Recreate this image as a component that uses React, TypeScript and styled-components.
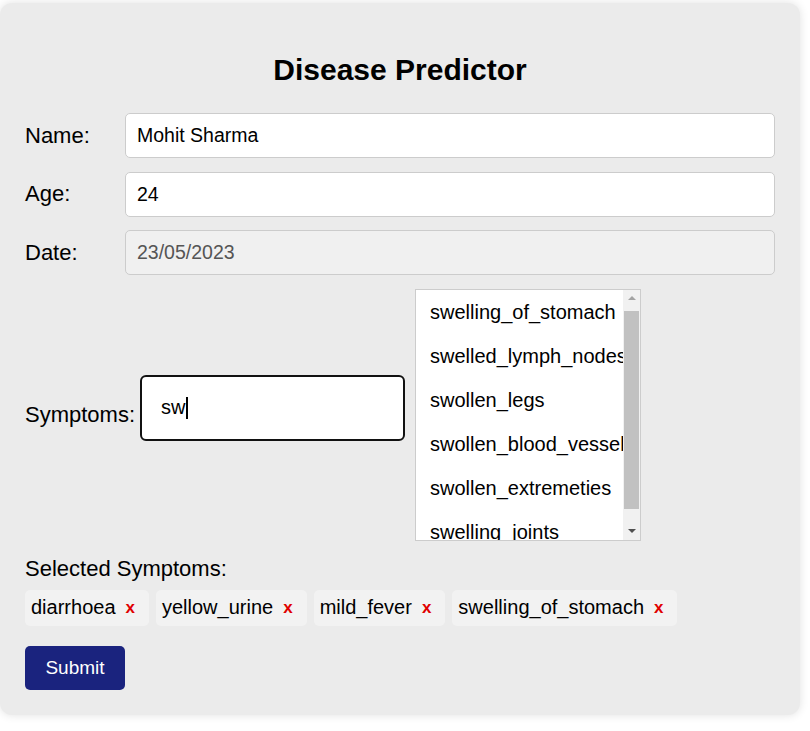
import React from "react";
import styled, { createGlobalStyle } from "styled-components";

const GlobalStyle = createGlobalStyle`
  html, body {
    margin: 0;
    padding: 0;
    background: #ffffff;
    font-family: "Liberation Sans", Arial, sans-serif;
  }
`;

const Page = styled.div`
  padding: 3px 10px 14px 0;
`;

const Card = styled.div`
  width: 800px;
  box-sizing: border-box;
  padding: 25px 25px 25px;
  background: #ebebeb;
  border-radius: 12px;
  box-shadow: 0 0 10px rgba(0, 0, 0, 0.12);
`;

const Title = styled.h2`
  margin: 25px 0 26px;
  font-size: 30px;
  line-height: 34px;
  font-weight: bold;
  text-align: center;
  color: #000;
`;

const FieldRow = styled.div`
  display: flex;
  align-items: center;
  height: 45px;
  margin-bottom: 13.5px;
`;

const Label = styled.label`
  width: 100px;
  flex-shrink: 0;
  font-size: 22px;
  color: #000;
`;

const TextInput = styled.input<{ $disabled?: boolean }>`
  flex: 1;
  height: 45px;
  box-sizing: border-box;
  border: 1px solid #cccccc;
  border-radius: 5px;
  padding: 0 11px;
  font-family: "Liberation Sans", Arial, sans-serif;
  font-size: 19.5px;
  color: ${(p) => (p.$disabled ? "#555555" : "#000000")};
  background: ${(p) => (p.$disabled ? "#f0f0f0" : "#ffffff")};
  outline: none;
`;

const SymptomsRow = styled.div`
  display: flex;
  align-items: center;
  margin-top: 1.5px;
`;

const SymptomsLabel = styled.label`
  font-size: 22px;
  color: #000;
  margin-right: 5px;
`;

const SearchBox = styled.div`
  width: 265px;
  height: 66px;
  box-sizing: border-box;
  border: 2px solid #111111;
  border-radius: 6px;
  background: #ffffff;
  padding-left: 19px;
  display: flex;
  align-items: center;
  font-size: 20px;
  color: #000;
  margin-right: 10px;
  margin-bottom: 14px;
`;

const Caret = styled.span`
  display: inline-block;
  width: 1.5px;
  height: 22px;
  background: #000;
  margin-left: 1px;
`;

const SuggestList = styled.div`
  width: 226px;
  height: 252px;
  box-sizing: border-box;
  border: 1px solid #cccccc;
  background: #ffffff;
  display: flex;
  overflow: hidden;
`;

const Items = styled.ul`
  flex: 1;
  min-width: 0;
  margin: 0;
  padding: 0;
  list-style: none;
  overflow: hidden;
`;

const Item = styled.li`
  padding: 12px 0 12px 14px;
  line-height: 20px;
  font-size: 20px;
  color: #000;
  white-space: nowrap;
  overflow: hidden;
`;

const ScrollTrack = styled.div`
  width: 17px;
  flex-shrink: 0;
  background: #f1f1f1;
  display: flex;
  flex-direction: column;
`;

const ScrollButton = styled.div`
  height: 17px;
  display: flex;
  align-items: center;
  justify-content: center;
`;

const Arrow = styled.span<{ $dir: "up" | "down" }>`
  width: 0;
  height: 0;
  border-left: 4px solid transparent;
  border-right: 4px solid transparent;
  ${(p) =>
    p.$dir === "up"
      ? "border-bottom: 4px solid #a3a3a3;"
      : "border-top: 4px solid #505050;"}
`;

const ScrollArea = styled.div`
  flex: 1;
  padding: 4px 1px 14px;
  display: flex;
`;

const Thumb = styled.div`
  flex: 1;
  background: #c1c1c1;
`;

const SectionLabel = styled.div`
  margin-top: 16px;
  font-size: 22px;
  line-height: 23px;
  color: #000;
`;

const TagList = styled.div`
  display: flex;
  flex-wrap: wrap;
  gap: 7px;
  margin-top: 10px;
`;

const Tag = styled.span`
  display: inline-flex;
  align-items: center;
  height: 36px;
  padding: 0 14px 0 6px;
  background: #f2f2f2;
  border-radius: 5px;
  font-size: 20px;
  color: #000;
`;

const RemoveButton = styled.button`
  border: none;
  background: none;
  padding: 0;
  margin-left: 10px;
  font-family: "Liberation Sans", Arial, sans-serif;
  font-size: 17px;
  font-weight: bold;
  line-height: 1;
  color: #e00000;
  cursor: pointer;
`;

const SubmitButton = styled.button`
  margin-top: 20px;
  width: 100px;
  height: 44px;
  border: none;
  border-radius: 5px;
  background: #1a237e;
  color: #ffffff;
  font-family: "Liberation Sans", Arial, sans-serif;
  font-size: 19px;
  cursor: pointer;
`;

const suggestions = [
  "swelling_of_stomach",
  "swelled_lymph_nodes",
  "swollen_legs",
  "swollen_blood_vessels",
  "swollen_extremeties",
  "swelling_joints",
];

const selected = ["diarrhoea", "yellow_urine", "mild_fever", "swelling_of_stomach"];

export default function App() {
  return (
    <>
      <GlobalStyle />
      <Page>
        <Card>
          <Title>Disease Predictor</Title>
          <FieldRow>
            <Label>Name:</Label>
            <TextInput defaultValue="Mohit Sharma" />
          </FieldRow>
          <FieldRow>
            <Label>Age:</Label>
            <TextInput defaultValue="24" />
          </FieldRow>
          <FieldRow>
            <Label>Date:</Label>
            <TextInput $disabled readOnly defaultValue="23/05/2023" />
          </FieldRow>
          <SymptomsRow>
            <SymptomsLabel>Symptoms:</SymptomsLabel>
            <SearchBox role="textbox">
              sw
              <Caret />
            </SearchBox>
            <SuggestList>
              <Items>
                {suggestions.map((s) => (
                  <Item key={s}>{s}</Item>
                ))}
              </Items>
              <ScrollTrack>
                <ScrollButton>
                  <Arrow $dir="up" />
                </ScrollButton>
                <ScrollArea>
                  <Thumb />
                </ScrollArea>
                <ScrollButton>
                  <Arrow $dir="down" />
                </ScrollButton>
              </ScrollTrack>
            </SuggestList>
          </SymptomsRow>
          <SectionLabel>Selected Symptoms:</SectionLabel>
          <TagList>
            {selected.map((s) => (
              <Tag key={s}>
                {s}
                <RemoveButton>x</RemoveButton>
              </Tag>
            ))}
          </TagList>
          <SubmitButton>Submit</SubmitButton>
        </Card>
      </Page>
    </>
  );
}
